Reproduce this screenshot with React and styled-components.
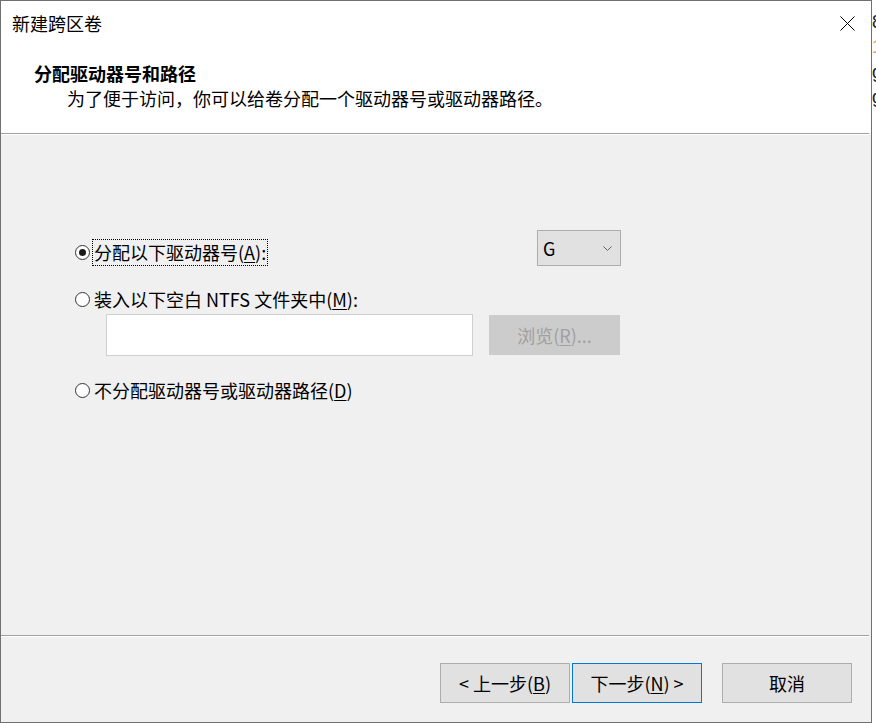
import React from "react";
import styled, { createGlobalStyle } from "styled-components";

const GlobalStyle = createGlobalStyle`
  html, body { margin: 0; padding: 0; background: #ffffff; }
  body {
    font-family: "Noto Sans CJK SC", "Noto Sans", sans-serif;
    font-size: 18px;
    color: #000;
  }
  * { box-sizing: border-box; }
`;

const Page = styled.div`
  display: flex;
  width: 876px;
  height: 723px;
  overflow: hidden;
`;

const Window = styled.div`
  width: 872px;
  height: 723px;
  border: 1px solid #707070;
  background: #f0f0f0;
  display: flex;
  flex-direction: column;
`;

const BackStrip = styled.div`
  width: 4px;
  overflow: hidden;
  background: #ffffff;
  padding-top: 10px;
  display: flex;
  flex-direction: column;
`;

const StripGlyph = styled.span`
  display: block;
  line-height: 25px;
  font-size: 18px;
  font-family: "Liberation Sans", sans-serif;
  color: ${(p) => p.$color || "#222"};
  white-space: nowrap;
`;

const TitleBar = styled.div`
  height: 44px;
  background: #ffffff;
  display: flex;
  align-items: center;
  justify-content: space-between;
  padding: 0 16px 0 11px;
`;

const TitleText = styled.span`
  line-height: 44px;
  font-size: 18px;
`;

const CloseButton = styled.span`
  display: flex;
  width: 15px;
  height: 15px;
`;

const Header = styled.div`
  height: 88px;
  background: #ffffff;
  padding: 16px 0 0 33px;
`;

const HeaderTitle = styled.div`
  font-weight: 700;
  line-height: 25px;
`;

const HeaderSub = styled.div`
  line-height: 25px;
  padding-left: 33px;
`;

const Separator = styled.div`
  height: 2px;
  border-top: 1px solid #a0a0a0;
  border-bottom: 1px solid #ffffff;
  margin-right: 2px;
`;

const Body = styled.div`
  height: 500px;
  padding: 95px 0 0 74px;
  display: flex;
  flex-direction: column;
`;

const DriveRow = styled.div`
  width: 546px;
  height: 36px;
  display: flex;
  justify-content: space-between;
  align-items: flex-end;
`;

const Option = styled.label`
  display: flex;
  align-items: center;
  height: 27px;
  margin-top: ${(p) => p.$gap || 0}px;
`;

const RadioCircle = styled.span`
  width: 15px;
  height: 15px;
  border-radius: 50%;
  border: 1px solid #333333;
  background: #ffffff;
  display: flex;
  align-items: center;
  justify-content: center;
  flex: none;
  &::after {
    content: "";
    width: 7px;
    height: 7px;
    border-radius: 50%;
    background: ${(p) => (p.$checked ? "#1a1a1a" : "transparent")};
  }
`;

const OptionText = styled.span`
  margin-left: 2px;
  padding: 0 1px 0 1px;
  line-height: 25px;
  border: 1px ${(p) => (p.$focused ? "dotted #000" : "solid transparent")};
  white-space: nowrap;
`;

const Key = styled.u`
  text-decoration-thickness: 1px;
  text-underline-offset: 2px;
`;

const Select = styled.div`
  width: 84px;
  height: 36px;
  background: #e1e1e1;
  border: 1px solid #adadad;
  display: flex;
  align-items: center;
  justify-content: space-between;
  padding: 0 8px 0 5px;
  line-height: 34px;
`;

const PathRow = styled.div`
  display: flex;
  align-items: center;
  gap: 16px;
  margin-top: 1px;
  padding-left: 31px;
`;

const PathInput = styled.div`
  width: 367px;
  height: 42px;
  background: #ffffff;
  border: 1px solid #cfcfcf;
`;

const BrowseButton = styled.div`
  width: 131px;
  height: 40px;
  background: #cccccc;
  color: #a0a0a0;
  display: flex;
  align-items: center;
  justify-content: center;
  line-height: 25px;
`;

const Footer = styled.div`
  flex: 1;
  display: flex;
  justify-content: flex-end;
  align-items: flex-start;
  padding: 26px 19px 0 0;
`;

const Button = styled.div`
  width: 130px;
  height: 40px;
  background: #e1e1e1;
  border: 1px solid ${(p) => (p.$primary ? "#0078d7" : "#adadad")};
  display: flex;
  align-items: center;
  justify-content: center;
  line-height: 25px;
  margin-left: ${(p) => p.$gap || 0}px;
  white-space: nowrap;
`;

export default function App() {
  return (
    <>
      <GlobalStyle />
      <Page>
        <Window>
          <TitleBar>
            <TitleText>新建跨区卷</TitleText>
            <CloseButton>
              <svg width="15" height="15" viewBox="0 0 15 15">
                <path d="M0.5 0.5 L14.5 14.5 M14.5 0.5 L0.5 14.5" stroke="#000" strokeWidth="1" fill="none" />
              </svg>
            </CloseButton>
          </TitleBar>
          <Header>
            <HeaderTitle>分配驱动器号和路径</HeaderTitle>
            <HeaderSub>为了便于访问，你可以给卷分配一个驱动器号或驱动器路径。</HeaderSub>
          </Header>
          <Separator />
          <Body>
            <DriveRow>
              <Option>
                <RadioCircle $checked />
                <OptionText $focused>
                  分配以下驱动器号(<Key>A</Key>):
                </OptionText>
              </Option>
              <Select>
                <span>G</span>
                <svg width="9" height="5" viewBox="0 0 9 5">
                  <path d="M0.5 0.5 L4.5 4.5 L8.5 0.5" stroke="#606060" strokeWidth="1" fill="none" />
                </svg>
              </Select>
            </DriveRow>
            <Option $gap={20}>
              <RadioCircle />
              <OptionText>
                装入以下空白 NTFS 文件夹中(<Key>M</Key>):
              </OptionText>
            </Option>
            <PathRow>
              <PathInput />
              <BrowseButton>
                浏览(<Key>R</Key>)...
              </BrowseButton>
            </PathRow>
            <Option $gap={21}>
              <RadioCircle />
              <OptionText>
                不分配驱动器号或驱动器路径(<Key>D</Key>)
              </OptionText>
            </Option>
          </Body>
          <Separator />
          <Footer>
            <Button>
              &lt; 上一步(<Key>B</Key>)
            </Button>
            <Button $primary $gap={2}>
              下一步(<Key>N</Key>) &gt;
            </Button>
            <Button $gap={20}>取消</Button>
          </Footer>
        </Window>
        <BackStrip>
          <StripGlyph>8</StripGlyph>
          <StripGlyph $color="#e8a040">1</StripGlyph>
          <StripGlyph>g</StripGlyph>
          <StripGlyph>g</StripGlyph>
        </BackStrip>
      </Page>
    </>
  );
}
